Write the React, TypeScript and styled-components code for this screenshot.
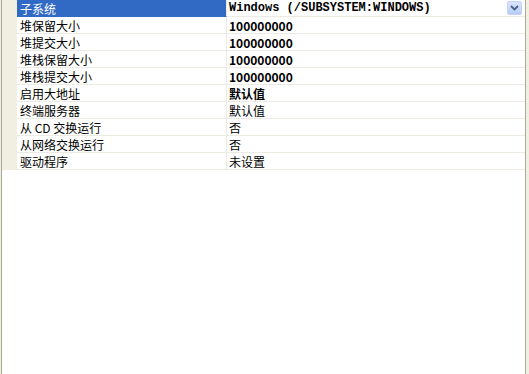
import styled, { createGlobalStyle } from "styled-components";

const GlobalStyle = createGlobalStyle`
  html, body {
    margin: 0;
    padding: 0;
    background: #ffffff;
  }
`;

const Frame = styled.div`
  display: flex;
  height: 374px;
  width: 529px;
  box-sizing: border-box;
  background: #ffffff;
  border-left: 1px solid #f1efe2;
  border-right: 3px solid #f1efe2;
`;

const Panel = styled.div`
  flex: 1;
  border-left: 1px solid #aca899;
  border-right: 1px solid #aca899;
  font-family: "Noto Sans CJK SC", "DejaVu Sans", sans-serif;
  font-size: 12px;
  color: #000;
`;

const Row = styled.div`
  display: grid;
  grid-template-columns: 15px 210px 1fr;
  height: 17px;
`;

const Gutter = styled.div`
  background: #f1efe2;
`;

const NameCell = styled.div<{ selected?: boolean }>`
  display: flex;
  align-items: center;
  padding-left: 3px;
  height: 16px;
  background: ${(p) => (p.selected ? "#316ac5" : "#ffffff")};
  color: ${(p) => (p.selected ? "#ffffff" : "#000000")};
  border-bottom: 1px solid ${(p) => (p.selected ? "#316ac5" : "#ebeae3")};
  border-right: 1px solid #ebeae3;
  white-space: nowrap;
`;

const ValueCell = styled.div<{ bold?: boolean }>`
  position: relative;
  display: flex;
  align-items: center;
  padding-left: 2px;
  height: 16px;
  border-bottom: 1px solid #ebeae3;
  font-weight: ${(p) => (p.bold ? 700 : 400)};
  white-space: nowrap;
`;

const Mono = styled.span`
  font-family: "Liberation Mono", "DejaVu Sans Mono", monospace;
  font-size: 12px;
  font-weight: 700;
`;

const DropButton = styled.div`
  position: absolute;
  right: 3px;
  top: 1px;
  width: 15px;
  height: 14px;
  border-radius: 2px;
  background: linear-gradient(#dbe6fd, #b6cbf7);
  border: 1px solid #c3d3fd;
  box-sizing: border-box;
  display: flex;
  align-items: center;
  justify-content: center;
`;

type Prop = { name: string; value: string; bold?: boolean; mono?: boolean };

const props: Prop[] = [
  { name: "子系统", value: "Windows (/SUBSYSTEM:WINDOWS)", bold: true, mono: true },
  { name: "堆保留大小", value: "100000000", bold: true },
  { name: "堆提交大小", value: "100000000", bold: true },
  { name: "堆栈保留大小", value: "100000000", bold: true },
  { name: "堆栈提交大小", value: "100000000", bold: true },
  { name: "启用大地址", value: "默认值", bold: true },
  { name: "终端服务器", value: "默认值" },
  { name: "从 CD 交换运行", value: "否" },
  { name: "从网络交换运行", value: "否" },
  { name: "驱动程序", value: "未设置" },
];

const App = () => {
  return (
    <>
      <GlobalStyle />
      <Frame>
        <Panel>
          {props.map((p, i) => (
            <Row key={p.name}>
              <Gutter />
              <NameCell selected={i === 0}>{p.name}</NameCell>
              <ValueCell bold={p.bold}>
                {p.mono ? <Mono>{p.value}</Mono> : p.value}
                {i === 0 && (
                  <DropButton>
                    <svg width="9" height="6" viewBox="0 0 9 6">
                      <path d="M1 1 L4.5 4.5 L8 1" fill="none" stroke="#4d6185" strokeWidth="1.8" />
                    </svg>
                  </DropButton>
                )}
              </ValueCell>
            </Row>
          ))}
        </Panel>
      </Frame>
    </>
  );
};

export default App;
